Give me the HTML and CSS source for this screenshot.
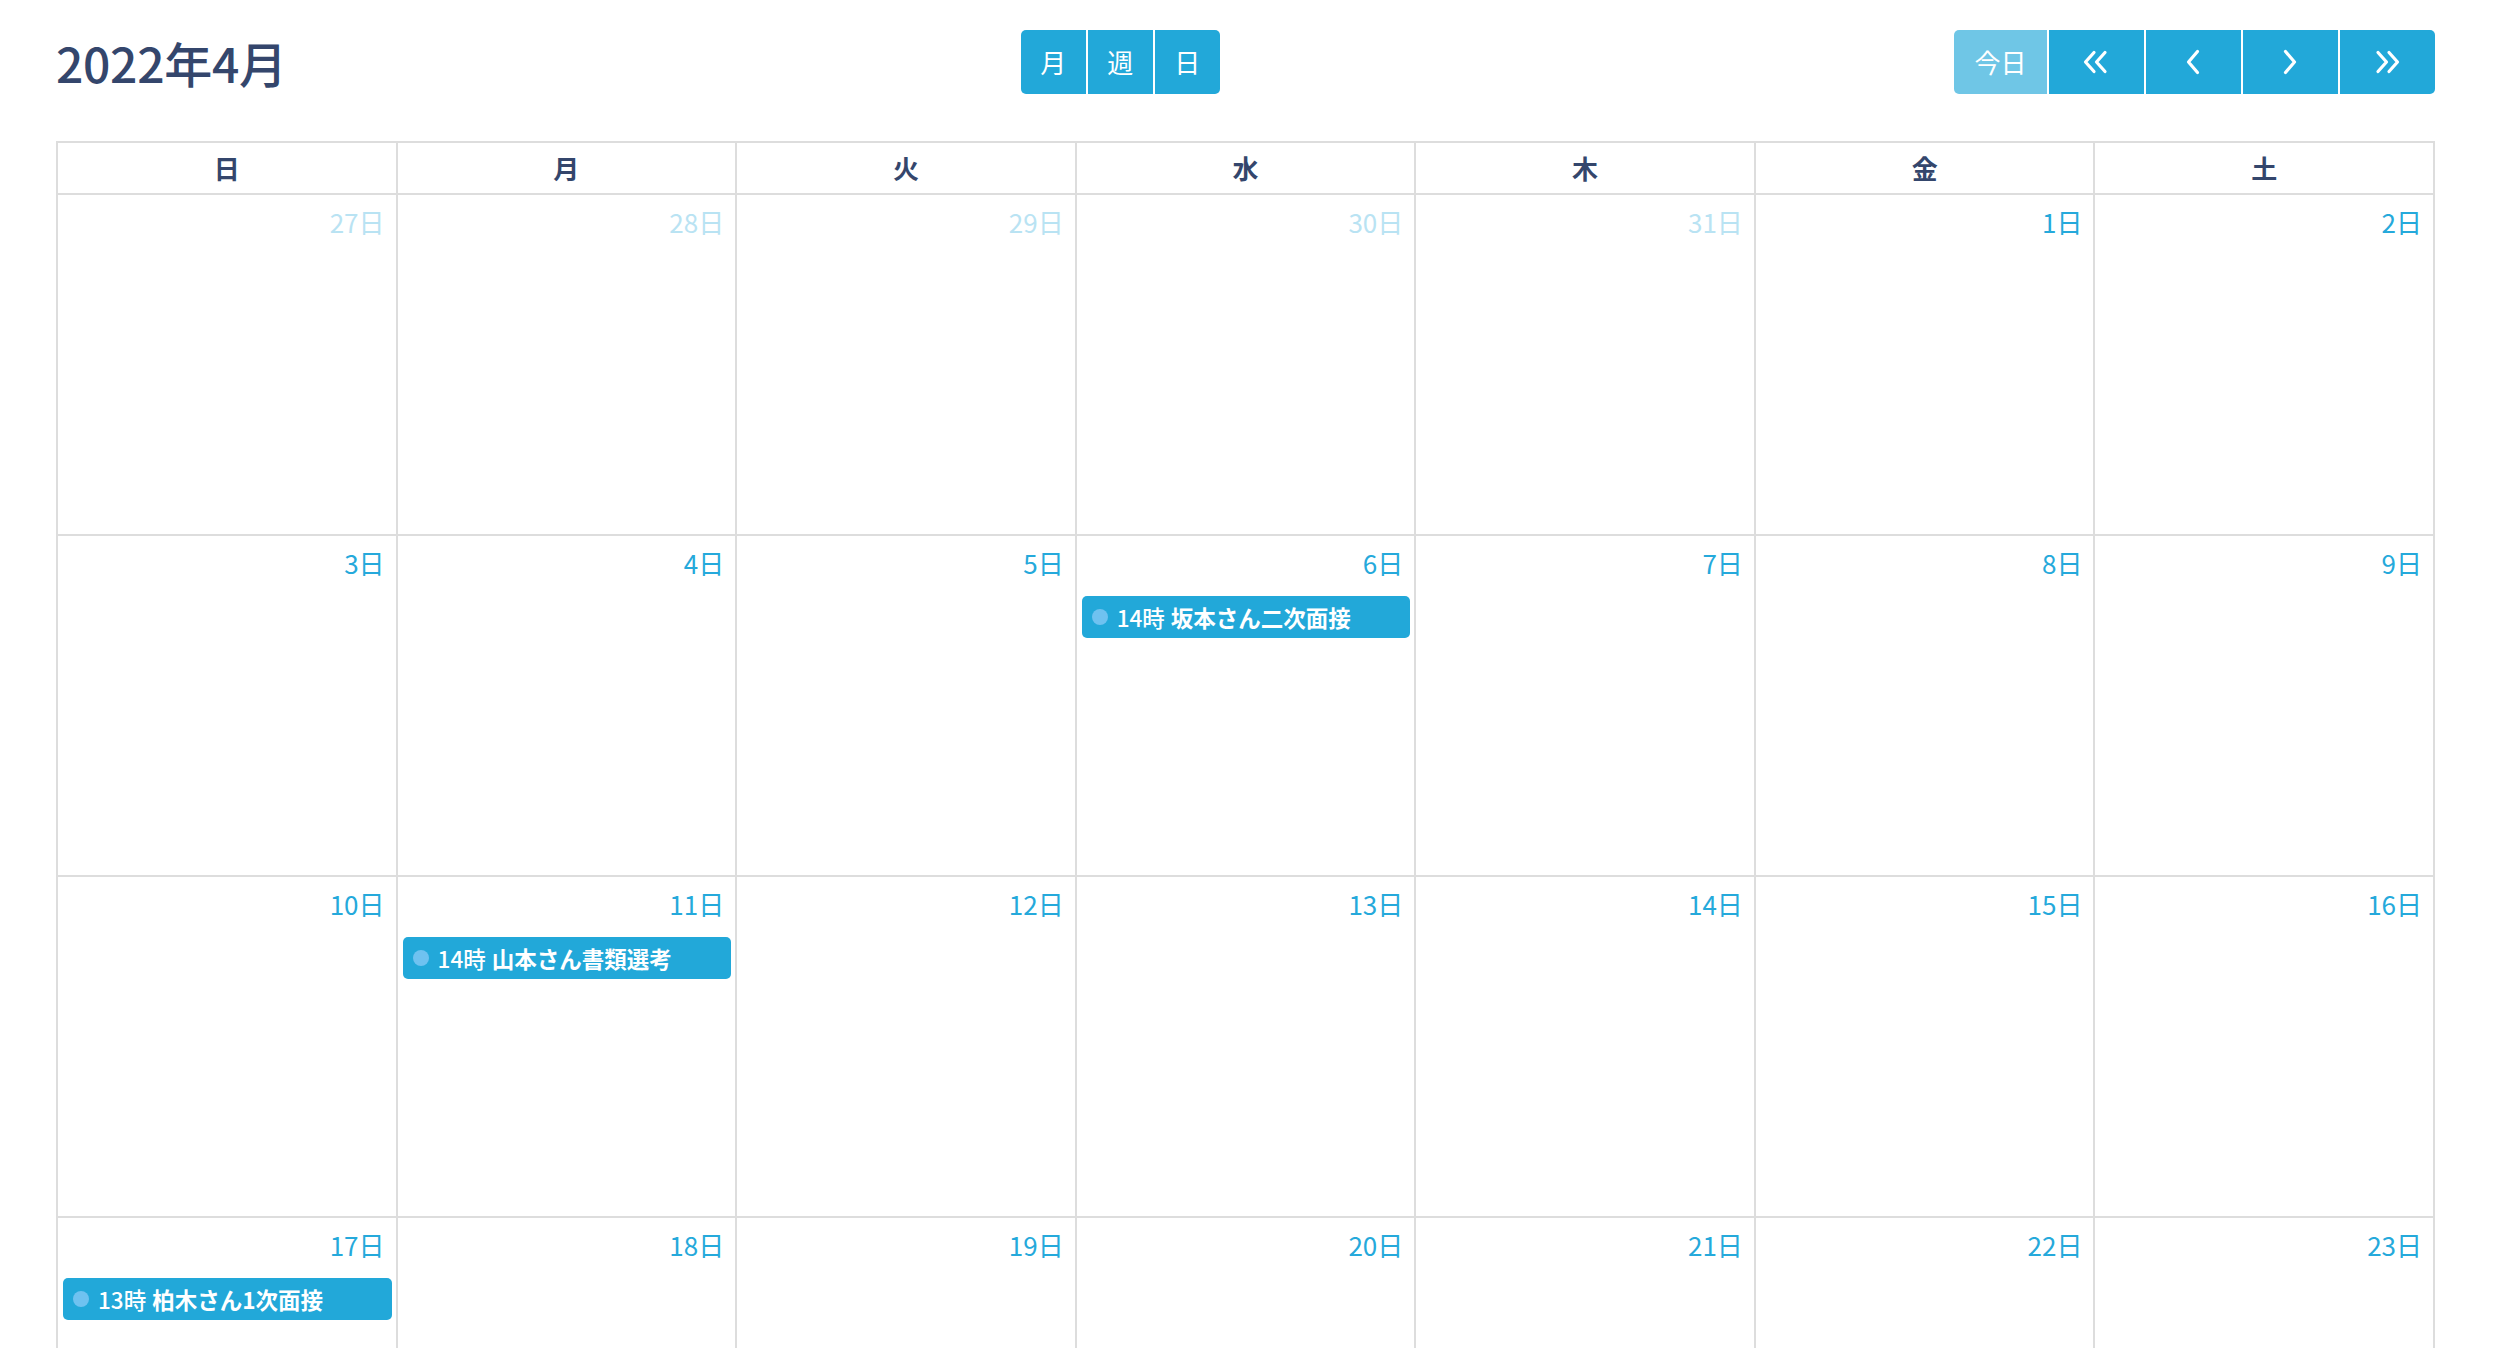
FILE: index.html
```html
<!DOCTYPE html>
<html lang="ja">
<head>
<meta charset="utf-8">
<title>カレンダー</title>
<link rel="stylesheet" href="styles.css">
</head>
<body>
<div class="calendar">
  <div class="toolbar">
    <h2 class="title">2022年4月</h2>
    <div class="btn-group">
      <button class="btn view">月</button>
      <button class="btn view">週</button>
      <button class="btn view">日</button>
    </div>
    <div class="btn-group">
      <button class="btn today">今日</button>
      <button class="btn nav"><svg width="28" height="24" viewBox="0 0 28 24"><path d="M12 2.5 L3.5 12 L12 21.5 M23 2.5 L14.5 12 L23 21.5" fill="none" stroke="#fff" stroke-width="3.2" stroke-linecap="round" stroke-linejoin="round"/></svg></button>
      <button class="btn nav"><svg width="16" height="26" viewBox="0 0 16 26"><path d="M12.5 2.5 L3.5 13 L12.5 23.5" fill="none" stroke="#fff" stroke-width="3.2" stroke-linecap="round" stroke-linejoin="round"/></svg></button>
      <button class="btn nav"><svg width="16" height="26" viewBox="0 0 16 26"><path d="M3.5 2.5 L12.5 13 L3.5 23.5" fill="none" stroke="#fff" stroke-width="3.2" stroke-linecap="round" stroke-linejoin="round"/></svg></button>
      <button class="btn nav"><svg width="28" height="24" viewBox="0 0 28 24"><path d="M5 2.5 L13.5 12 L5 21.5 M16 2.5 L24.5 12 L16 21.5" fill="none" stroke="#fff" stroke-width="3.2" stroke-linecap="round" stroke-linejoin="round"/></svg></button>
    </div>
  </div>

  <div class="grid">
    <div class="head">日</div><div class="head">月</div><div class="head">火</div><div class="head">水</div><div class="head">木</div><div class="head">金</div><div class="head">土</div>

    <div class="cell other"><div class="date">27日</div></div>
    <div class="cell other"><div class="date">28日</div></div>
    <div class="cell other"><div class="date">29日</div></div>
    <div class="cell other"><div class="date">30日</div></div>
    <div class="cell other"><div class="date">31日</div></div>
    <div class="cell"><div class="date">1日</div></div>
    <div class="cell"><div class="date">2日</div></div>

    <div class="cell"><div class="date">3日</div></div>
    <div class="cell"><div class="date">4日</div></div>
    <div class="cell"><div class="date">5日</div></div>
    <div class="cell"><div class="date">6日</div><div class="event"><span class="dot"></span><span class="time">14時</span><span class="name">坂本さん二次面接</span></div></div>
    <div class="cell"><div class="date">7日</div></div>
    <div class="cell"><div class="date">8日</div></div>
    <div class="cell"><div class="date">9日</div></div>

    <div class="cell"><div class="date">10日</div></div>
    <div class="cell"><div class="date">11日</div><div class="event"><span class="dot"></span><span class="time">14時</span><span class="name">山本さん書類選考</span></div></div>
    <div class="cell"><div class="date">12日</div></div>
    <div class="cell"><div class="date">13日</div></div>
    <div class="cell"><div class="date">14日</div></div>
    <div class="cell"><div class="date">15日</div></div>
    <div class="cell"><div class="date">16日</div></div>

    <div class="cell"><div class="date">17日</div><div class="event"><span class="dot"></span><span class="time">13時</span><span class="name">柏木さん1次面接</span></div></div>
    <div class="cell"><div class="date">18日</div></div>
    <div class="cell"><div class="date">19日</div></div>
    <div class="cell"><div class="date">20日</div></div>
    <div class="cell"><div class="date">21日</div></div>
    <div class="cell"><div class="date">22日</div></div>
    <div class="cell"><div class="date">23日</div></div>
  </div>
</div>
</body>
</html>
```

FILE: styles.css
```css
html, body {
  margin: 0;
  padding: 0;
  background: #ffffff;
  overflow: hidden;
}

body {
  font-family: "Noto Sans CJK JP", "Noto Sans", sans-serif;
}

.calendar {
  width: 2379px;
  margin: 30px 0 0 56px;
}

.toolbar {
  display: flex;
  justify-content: space-between;
  align-items: center;
  height: 64px;
  margin-bottom: 47px;
}

.title {
  margin: 0;
  font-size: 48px;
  font-weight: 500;
  line-height: 64px;
  color: #34466c;
  letter-spacing: -0.3px;
}

.btn-group {
  display: flex;
  gap: 2px;
}

.btn {
  display: flex;
  align-items: center;
  justify-content: center;
  height: 64px;
  padding: 0;
  border: none;
  background: #22a8d9;
  color: #ffffff;
  font-family: "Noto Sans CJK JP", "Noto Sans", sans-serif;
  font-size: 26px;
  line-height: 1;
}

.btn-group .btn:first-child {
  border-radius: 5px 0 0 5px;
}

.btn-group .btn:last-child {
  border-radius: 0 5px 5px 0;
}

.view {
  width: 65px;
}

.today {
  width: 93px;
  background: #6fc6e6;
}

.nav {
  width: 95px;
}

.grid {
  display: grid;
  grid-template-columns: repeat(7, 1fr);
  grid-template-rows: 52px;
  grid-auto-rows: 341px;
  border-top: 2px solid #dddddd;
  border-left: 2px solid #dddddd;
}

.head {
  display: flex;
  align-items: center;
  justify-content: center;
  border-right: 2px solid #dddddd;
  border-bottom: 2px solid #dddddd;
  font-size: 26px;
  font-weight: 700;
  color: #34466c;
  height: 48px;
  padding-bottom: 2px;
}

.cell {
  border-right: 2px solid #dddddd;
  border-bottom: 2px solid #dddddd;
  padding-top: 11px;
  box-sizing: border-box;
}

.date {
  text-align: right;
  padding-right: 11px;
  font-size: 26px;
  line-height: 31px;
  color: #25a9db;
}

.other .date {
  color: #b9e3f3;
}

.event {
  display: flex;
  align-items: center;
  height: 42px;
  margin: 18px 4px 0 5px;
  padding-left: 10px;
  border-radius: 5px;
  background: #22a8d9;
  color: #ffffff;
  font-size: 22.5px;
  white-space: nowrap;
}

.dot {
  width: 16px;
  height: 16px;
  border-radius: 50%;
  background: #6fc2f0;
  margin-right: 9px;
  flex: none;
}

.time {
  font-weight: 500;
  margin-right: 6px;
}

.name {
  font-weight: 700;
}
```
